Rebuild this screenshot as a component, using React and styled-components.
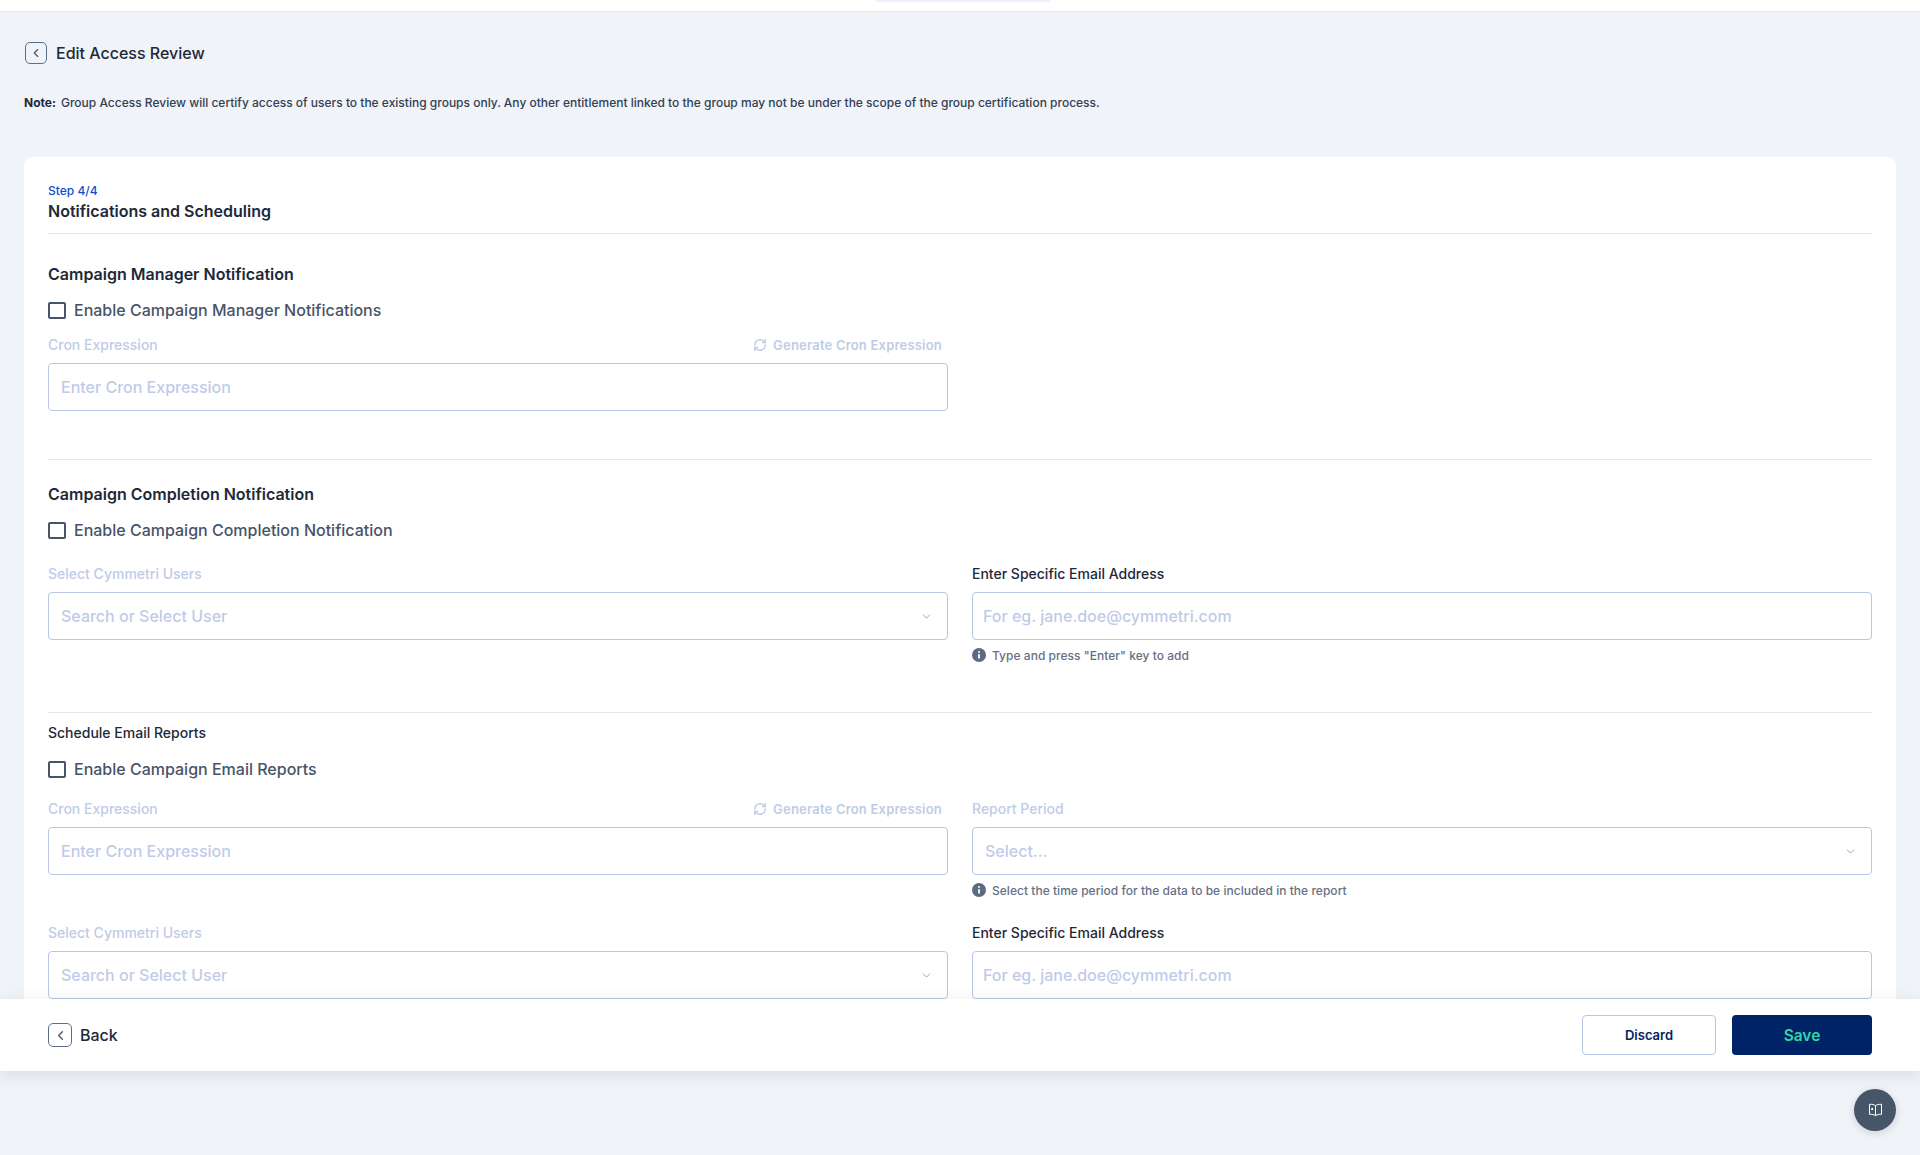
import styled, { createGlobalStyle } from "styled-components";
import { ChevronLeft, ChevronDown, RefreshCw } from "lucide-react";

const GlobalStyle = createGlobalStyle`
    * { box-sizing: border-box; }
    html, body { margin: 0; padding: 0; height: 100%; }
    body {
        font-family: Inter, "Noto Sans", sans-serif;
        background: #f0f3f8;
        color: #101828;
        overflow: hidden;
    }
`;

function InfoDot() {
    return (
        <svg width="14" height="14" viewBox="0 0 14 14" aria-hidden="true">
            <circle cx="7" cy="7" r="7" fill="#5b6b82" />
            <rect x="6.1" y="6" width="1.8" height="4.6" rx="0.4" fill="#fff" />
            <circle cx="7" cy="4" r="1" fill="#fff" />
        </svg>
    );
}

function GuideBook() {
    return (
        <svg width="15" height="14" viewBox="0 0 15 14" fill="none" stroke="#fff" strokeWidth="1" strokeLinejoin="round" aria-hidden="true">
            <path d="M7.5 2.6C6 1.6 4 1.2 1.5 1.3v10c2.5-.1 4.5.3 6 1.4 1.5-1.1 3.5-1.5 6-1.4v-10c-2.5-.1-4.5.3-6 1.3z" />
            <path d="M7.5 2.6v10.1" />
            <rect x="3.3" y="5" width="1.8" height="2" fill="#fff" stroke="none" />
        </svg>
    );
}

function Field({ label, placeholder, disabled, select, generate, hint, indent }) {
    return (
        <FieldWrap>
            <LabelRow>
                <FieldLabel $disabled={disabled}>{label}</FieldLabel>
                {generate && (
                    <GenerateLink>
                        <RefreshCw size={14} strokeWidth={2.4} />
                        Generate Cron Expression
                    </GenerateLink>
                )}
            </LabelRow>
            <InputBox $indent={indent}>
                <Placeholder>{placeholder}</Placeholder>
                {select && <ChevronDown size={13} color="#94a3c0" strokeWidth={1.8} />}
            </InputBox>
            {hint && (
                <Hint>
                    <InfoDot />
                    {hint}
                </Hint>
            )}
        </FieldWrap>
    );
}

function CheckRow({ children }) {
    return (
        <CheckLine>
            <CheckBox />
            {children}
        </CheckLine>
    );
}

export default function App() {
    return (
        <>
            <GlobalStyle />
            <Page>
                <TopBar>
                    <TopPill />
                </TopBar>

                <Scroller>
                    <TitleRow>
                        <BackIcon $size={22}>
                            <ChevronLeft size={14} strokeWidth={2} />
                        </BackIcon>
                        Edit Access Review
                    </TitleRow>

                    <Note>
                        <b>Note:</b>
                        Group Access Review will certify access of users to the existing groups only. Any other entitlement linked to the group may not be under the scope of the group certification process.
                    </Note>

                    <Card>
                        <CardHeader>
                            <StepText>Step 4/4</StepText>
                            <StepTitle>Notifications and Scheduling</StepTitle>
                        </CardHeader>

                        <Section $height={226} $top={30}>
                            <SectionTitle>Campaign Manager Notification</SectionTitle>
                            <CheckRow>Enable Campaign Manager Notifications</CheckRow>
                            <FieldGrid $top={15}>
                                <Field label="Cron Expression" placeholder="Enter Cron Expression" disabled generate indent={12} />
                            </FieldGrid>
                        </Section>

                        <Section $height={253} $top={24}>
                            <SectionTitle>Campaign Completion Notification</SectionTitle>
                            <CheckRow>Enable Campaign Completion Notification</CheckRow>
                            <FieldGrid $top={24}>
                                <Field label="Select Cymmetri Users" placeholder="Search or Select User" disabled select indent={12} />
                                <Field
                                    label="Enter Specific Email Address"
                                    placeholder="For eg. jane.doe@cymmetri.com"
                                    hint={'Type and press "Enter" key to add'}
                                    indent={10}
                                />
                            </FieldGrid>
                        </Section>

                        <LastSection>
                            <SmallTitle>Schedule Email Reports</SmallTitle>
                            <CheckRow>Enable Campaign Email Reports</CheckRow>
                            <FieldGrid $top={20}>
                                <Field label="Cron Expression" placeholder="Enter Cron Expression" disabled generate indent={12} />
                                <Field
                                    label="Report Period"
                                    placeholder="Select..."
                                    disabled
                                    select
                                    hint="Select the time period for the data to be included in the report"
                                    indent={12}
                                />
                                <Field label="Select Cymmetri Users" placeholder="Search or Select User" disabled select indent={12} />
                                <Field label="Enter Specific Email Address" placeholder="For eg. jane.doe@cymmetri.com" indent={10} />
                            </FieldGrid>
                        </LastSection>
                    </Card>
                </Scroller>

                <Footer>
                    <BackLink>
                        <BackIcon $size={24}>
                            <ChevronLeft size={15} strokeWidth={2} />
                        </BackIcon>
                        Back
                    </BackLink>
                    <Actions>
                        <DiscardButton>Discard</DiscardButton>
                        <SaveButton>Save</SaveButton>
                    </Actions>
                </Footer>

                <HelpButton>
                    <GuideBook />
                </HelpButton>
            </Page>
        </>
    );
}

const Page = styled.div`
    position: relative;
    height: 1155px;
    display: flex;
    flex-direction: column;
`;

const TopBar = styled.div`
    height: 12px;
    flex: none;
    background: #fff;
    border-bottom: 1px solid #e2e6ee;
    display: flex;
    justify-content: center;
`;

const TopPill = styled.div`
    width: 176px;
    height: 2px;
    margin-left: 5px;
    background: #eef1f6;
    border-radius: 0 0 6px 6px;
`;

const Scroller = styled.div`
    height: 987px;
    flex: none;
    overflow: hidden;
    padding: 30px 24px 0;
`;

const TitleRow = styled.div`
    display: flex;
    align-items: center;
    gap: 9px;
    height: 22px;
    padding-left: 1px;
    font-size: 16px;
    font-weight: 500;
    color: #1d2939;
`;

const BackIcon = styled.span`
    width: ${(p) => p.$size}px;
    height: ${(p) => p.$size}px;
    flex: none;
    display: flex;
    align-items: center;
    justify-content: center;
    border: 1.5px solid #5b6f8c;
    border-radius: 5px;
    color: #475569;
`;

const Note = styled.p`
    margin: 29px 0 0;
    height: 18px;
    display: flex;
    align-items: center;
    gap: 5px;
    font-size: 12px;
    font-weight: 500;
    color: #344054;
    white-space: nowrap;

    b {
        font-weight: 700;
        color: #1d2939;
    }
`;

const Card = styled.section`
    margin-top: 46px;
    padding: 0 24px 24px;
    background: #fff;
    border-radius: 8px 8px 0 0;
`;

const CardHeader = styled.header`
    height: 77px;
    padding-top: 27px;
    border-bottom: 1px solid #e4e7ec;
`;

const StepText = styled.div`
    font-size: 12px;
    line-height: 14px;
    font-weight: 500;
    color: #0b50d0;
`;

const StepTitle = styled.h2`
    margin: 3px 0 0;
    font-size: 16px;
    line-height: 20px;
    font-weight: 600;
    color: #1d2939;
`;

const Section = styled.div`
    height: ${(p) => p.$height}px;
    padding-top: ${(p) => p.$top}px;
    border-bottom: 1px solid #e4e7ec;
`;

const LastSection = styled.div`
    padding-top: 10px;
`;

const SectionTitle = styled.h3`
    margin: 0;
    height: 20px;
    font-size: 16px;
    line-height: 20px;
    font-weight: 600;
    color: #1d2939;
`;

const SmallTitle = styled.h3`
    margin: 0;
    height: 20px;
    font-size: 14px;
    line-height: 20px;
    font-weight: 500;
    color: #1d2939;
`;

const CheckLine = styled.label`
    margin-top: 16px;
    height: 20px;
    display: flex;
    align-items: center;
    gap: 8px;
    font-size: 16px;
    font-weight: 500;
    color: #475467;
`;

const CheckBox = styled.span`
    width: 18px;
    height: 17px;
    flex: none;
    border: 2px solid #475569;
    border-radius: 2px;
    background: #fff;
`;

const FieldGrid = styled.div`
    margin-top: ${(p) => p.$top}px;
    display: grid;
    grid-template-columns: 900px 900px;
    column-gap: 24px;
    row-gap: 25px;
    align-items: start;
`;

const FieldWrap = styled.div`
    min-width: 0;
`;

const LabelRow = styled.div`
    height: 20px;
    display: flex;
    align-items: center;
    justify-content: space-between;
    margin-bottom: 8px;
`;

const FieldLabel = styled.span`
    margin-bottom: 2px;
    font-size: 14px;
    font-weight: 500;
    color: ${(p) => (p.$disabled ? "#bfcbe8" : "#1d2939")};
`;

const GenerateLink = styled.span`
    display: flex;
    align-items: center;
    gap: 6px;
    margin-right: 6px;
    font-size: 13px;
    font-weight: 600;
    letter-spacing: 0.2px;
    color: #bfcbe8;
`;

const InputBox = styled.div`
    height: 48px;
    display: flex;
    align-items: center;
    justify-content: space-between;
    padding: 0 14px 0 ${(p) => p.$indent}px;
    border: 1px solid #b8c6e6;
    border-radius: 4px;
    background: #fff;
`;

const Placeholder = styled.span`
    font-size: 16px;
    font-weight: 500;
    color: #bfcbe8;
`;

const Hint = styled.div`
    margin-top: 7px;
    height: 16px;
    display: flex;
    align-items: center;
    gap: 6px;
    font-size: 12px;
    font-weight: 500;
    letter-spacing: 0.03px;
    color: #667085;
`;

const Footer = styled.footer`
    position: relative;
    height: 72px;
    flex: none;
    padding: 0 48px;
    display: flex;
    align-items: center;
    justify-content: space-between;
    background: #fff;
    box-shadow: 0 4px 16px rgba(16, 24, 40, 0.1);
`;

const BackLink = styled.div`
    display: flex;
    align-items: center;
    gap: 8px;
    font-size: 16px;
    font-weight: 500;
    color: #1d2939;
`;

const Actions = styled.div`
    display: flex;
    gap: 16px;
`;

const DiscardButton = styled.button`
    width: 134px;
    height: 40px;
    border: 1px solid #b8c6e6;
    border-radius: 4px;
    background: #fff;
    font-family: inherit;
    font-size: 13px;
    font-weight: 600;
    color: #002266;
`;

const SaveButton = styled.button`
    width: 140px;
    height: 40px;
    border: none;
    border-radius: 4px;
    background: #002266;
    font-family: inherit;
    font-size: 15.5px;
    font-weight: 600;
    color: #33d6a6;
`;

const HelpButton = styled.div`
    position: absolute;
    right: 24px;
    bottom: 24px;
    width: 42px;
    height: 42px;
    display: flex;
    align-items: center;
    justify-content: center;
    border-radius: 50%;
    background: #475569;
    box-shadow: 0 2px 8px rgba(16, 24, 40, 0.15);
`;
